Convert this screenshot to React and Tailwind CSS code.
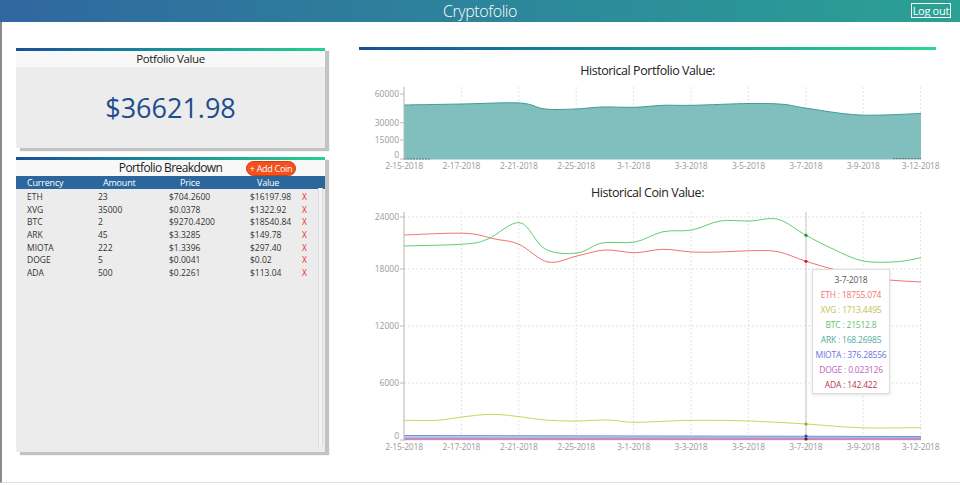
import React from "react";

// smooth line through points (catmull-rom -> bezier)
const smooth = (pts) => {
  let d = `M${pts[0][0]},${pts[0][1]}`;
  for (let i = 0; i < pts.length - 1; i++) {
    const p0 = pts[i - 1] || pts[i];
    const p1 = pts[i];
    const p2 = pts[i + 1];
    const p3 = pts[i + 2] || p2;
    const c1x = p1[0] + (p2[0] - p0[0]) / 6;
    const c1y = p1[1] + (p2[1] - p0[1]) / 6;
    const c2x = p2[0] - (p3[0] - p1[0]) / 6;
    const c2y = p2[1] - (p3[1] - p1[1]) / 6;
    d += ` C${c1x},${c1y} ${c2x},${c2y} ${p2[0]},${p2[1]}`;
  }
  return d;
};

const dates = ["2-15-2018", "2-17-2018", "2-21-2018", "2-25-2018", "3-1-2018", "3-3-2018", "3-5-2018", "3-7-2018", "3-9-2018", "3-12-2018"];
const xs = dates.map((_, i) => 404 + i * 57.4);

const portfolioPts = [[404, 105], [462, 104], [520, 103], [545, 109], [575, 109], [602, 107], [635, 107.3], [663, 105.3], [692, 105.3], [750, 103.5], [783, 104.3], [807, 108.3], [860, 115], [921, 113.5]];

const ethPts = [[404, 234], [465, 232.3], [495, 238], [519, 243.3], [548, 261], [577, 255], [605, 249], [635, 251.7], [663, 248.3], [692, 251], [720, 251], [750, 249.7], [778, 250.7], [806, 260.3], [840, 270], [880, 278], [921, 281]];
const btcPts = [[404, 245], [465, 243], [488, 238], [520, 221.7], [545, 248], [577, 252], [602, 242], [635, 241], [663, 230.7], [692, 229], [720, 220], [750, 220], [778, 218.3], [806, 234.3], [833, 248], [863, 260], [897, 260.7], [921, 256.7]];
const xvgPts = [[404, 419.3], [437, 419.3], [462, 416], [492, 413.3], [522, 416], [545, 419], [575, 420], [608, 419], [635, 421.3], [692, 419.3], [750, 420], [806, 423], [860, 426.7], [921, 426.7]];

const coins = [
  ["ETH", "23", "$704.2600", "$16197.98"],
  ["XVG", "35000", "$0.0378", "$1322.92"],
  ["BTC", "2", "$9270.4200", "$18540.84"],
  ["ARK", "45", "$3.3285", "$149.78"],
  ["MIOTA", "222", "$1.3396", "$297.40"],
  ["DOGE", "5", "$0.0041", "$0.02"],
  ["ADA", "500", "$0.2261", "$113.04"],
];

const tooltipRows = [
  ["ETH : 18755.074", "text-[#f07373]"],
  ["XVG : 1713.4495", "text-[#bfc44e]"],
  ["BTC : 21512.8", "text-[#5fbf6c]"],
  ["ARK : 168.26985", "text-[#4fa9a0]"],
  ["MIOTA : 376.28556", "text-[#6b72e2]"],
  ["DOGE : 0.023126", "text-[#c35ec4]"],
  ["ADA : 142.422", "text-[#b8344f]"],
];

const Grid = ({ top, bottom }) => (
  <g>
    {xs.map((x) => (
      <line key={x} x1={x} x2={x} y1={top} y2={bottom} stroke="#e3e3e3" strokeDasharray="2 2" />
    ))}
  </g>
);

const XLabels = ({ y }) => (
  <g>
    {dates.map((d, i) => (
      <text key={d} x={xs[i]} y={y} textAnchor="middle" fontSize="8.5" letterSpacing="-0.2" fill="#9a9a9a">{d}</text>
    ))}
  </g>
);

const YLabels = ({ ticks }) => (
  <g>
    {ticks.map(([v, y]) => (
      <g key={v}>
        <line x1="400" x2="404" y1={y} y2={y} stroke="#bbb" />
        <text x="399" y={v === 0 ? y - 1 : y + 3} textAnchor="end" fontSize="8.5" fill="#9a9a9a">{v}</text>
      </g>
    ))}
  </g>
);

const Card = ({ children, className = "" }) => (
  <div className={`relative shadow-[4px_3px_1px_#c3c3c3] ${className}`}>
    <div className="h-[3px] bg-gradient-to-r from-[#1d4f97] to-[#29d08d]" />
    {children}
  </div>
);

export default function App() {
  return (
    <div className="w-[960px] h-[485px] bg-white font-['Open_Sans',sans-serif] text-[#222] overflow-hidden">
      {/* Header */}
      <header className="relative h-[22px] flex items-center justify-center bg-gradient-to-r from-[#30679f] to-[#2aa194]">
        <h1 className="text-[16px] font-light text-white leading-none tracking-[-0.4px]">Cryptofolio</h1>
        <button className="absolute right-[9px] top-[3px] h-[15px] px-[1px] border border-white text-white text-[11px] leading-none tracking-[-0.3px]">Log out</button>
      </header>

      <main className="h-[461px] border-l-2 border-[#8a8a8a] border-b border-b-[#e2e2e2] flex pl-[14px] pt-[26px] gap-[34px]">
        {/* Left column */}
        <div className="w-[309px] flex flex-col gap-[9px]">
          <Card>
            <div className="h-[16px] bg-[#f8f8f8] flex items-center justify-center text-[11.5px] tracking-[-0.4px]">Potfolio Value</div>
            <div className="h-[81px] bg-[#ececec] flex items-center justify-center">
              <span className="text-[27px] text-[#1e4d8e] leading-none">$36621.98</span>
            </div>
          </Card>

          <Card className="h-[295px] bg-[#ececec]">
            <div className="relative h-[16px] bg-[#f8f8f8] flex items-center justify-center text-[12px] tracking-[-0.6px]">
              Portfolio Breakdown
              <button className="absolute left-[230px] top-[1px] w-[50px] h-[15px] rounded-full bg-[#f4511e] border border-[#c9420f] text-white text-[9px] leading-none tracking-[-0.3px]">+ Add Coin</button>
            </div>
            <div className="h-[13px] bg-[#2b679c] grid grid-cols-[76px_77px_77px_1fr] text-white text-[9px] tracking-[-0.2px] items-center pl-[11px]">
              <span>Currency</span>
              <span>Amount</span>
              <span>Price</span>
              <span>Value</span>
            </div>
            <div className="pt-[2px]">
              {coins.map((c) => (
                <div key={c[0]} className="h-[12.7px] grid grid-cols-[71px_71px_81px_52px_1fr] pl-[11px] items-center text-[8.5px] text-[#333]">
                  <span>{c[0]}</span>
                  <span>{c[1]}</span>
                  <span>{c[2]}</span>
                  <span>{c[3]}</span>
                  <span className="text-[#ee2b2b]">X</span>
                </div>
              ))}
            </div>
            <div className="absolute left-[302px] top-[31px] w-[5px] h-[258px] bg-[#f3f3f3] border-x border-[#dadada]" />
          </Card>
        </div>

        {/* Right panel */}
        <div className="w-[577px] flex flex-col -mt-[1px]">
          <div className="h-[3px] bg-gradient-to-r from-[#1b4f97] to-[#2ed68e]" />
          <h2 className="mt-[13px] h-[16px] text-[12.5px] tracking-[-0.45px] text-center leading-[16px]">Historical Portfolio Value:</h2>
          <svg className="mt-[6px] block overflow-visible" width="577" height="90" viewBox="359 85 577 90">
            <Grid top={87} bottom={159} />
            <path d={`${smooth(portfolioPts)} L921,159.5 L404,159.5 Z`} fill="#80bfbe" />
            <path d={smooth(portfolioPts)} fill="none" stroke="#3e9e93" strokeWidth="1" />
            <line x1="404" x2="430" y1="159" y2="159" stroke="#777" strokeDasharray="2 1" />
            <line x1="893" x2="921" y1="158.5" y2="158.5" stroke="#777" strokeDasharray="2 1" />
            <line x1="404" x2="404" y1="87" y2="160" stroke="#bbb" />
            <YLabels ticks={[[60000, 94], [30000, 122.7], [15000, 140], [0, 159]]} />
            <XLabels y={169} />
          </svg>

          <h2 className="mt-[10px] h-[16px] text-[12.5px] tracking-[-0.45px] text-center leading-[16px]">Historical Coin Value:</h2>
          <div className="relative mt-[6px]">
            <svg className="block overflow-visible" width="577" height="245" viewBox="359 206 577 245">
              <Grid top={211} bottom={439} />
              {[216, 268, 325, 382].map((y) => (
                <line key={y} x1="404" x2="922" y1={y} y2={y} stroke="#e3e3e3" strokeDasharray="2 2" />
              ))}
              <line x1="806" x2="806" y1="211" y2="439" stroke="#c8c8c8" />
              <path d={smooth(ethPts)} fill="none" stroke="#f47272" strokeWidth="1" />
              <path d={smooth(btcPts)} fill="none" stroke="#62cd6e" strokeWidth="1" />
              <path d={smooth(xvgPts)} fill="none" stroke="#cdd35c" strokeWidth="1" />
              <path d="M404,434.5 L921,435.5 L921,437.5 L404,437.5 Z" fill="#c8ccf5" />
              <line x1="404" x2="921" y1="434.5" y2="435.5" stroke="#7a86ee" strokeWidth="1" />
              <line x1="404" x2="921" y1="437" y2="437" stroke="#6dbdb4" strokeWidth="1" />
              <line x1="404" x2="921" y1="438" y2="438" stroke="#c15d9c" strokeWidth="1" />
              <line x1="404" x2="921" y1="438.7" y2="438.7" stroke="#d46aa8" strokeWidth="0.8" />
              <circle cx="806" cy="234.3" r="1.6" fill="#1e9e2a" />
              <circle cx="806" cy="260.3" r="1.6" fill="#e01515" />
              <circle cx="806" cy="423" r="1.6" fill="#a9a21a" />
              <circle cx="806" cy="435" r="1.6" fill="#2f3dc4" />
              <circle cx="806" cy="438" r="1.6" fill="#7d0d2a" />
              <line x1="404" x2="404" y1="211" y2="440" stroke="#bbb" />
              <YLabels ticks={[[24000, 216], [18000, 268], [12000, 325], [6000, 382], [0, 439]]} />
              <XLabels y={449} />
            </svg>

            {/* Tooltip */}
            <div className="absolute left-[453px] top-[62px] w-[78px] h-[125px] bg-white border border-[#dedede] shadow-[0_1px_3px_rgba(0,0,0,0.12)] flex flex-col items-center pt-[2px] text-[8.5px] tracking-[-0.2px] leading-[15px]">
              <span className="text-[#555]">3-7-2018</span>
              {tooltipRows.map(([t, c]) => (
                <span key={t} className={c}>{t}</span>
              ))}
            </div>
          </div>
        </div>
      </main>
    </div>
  );
}
